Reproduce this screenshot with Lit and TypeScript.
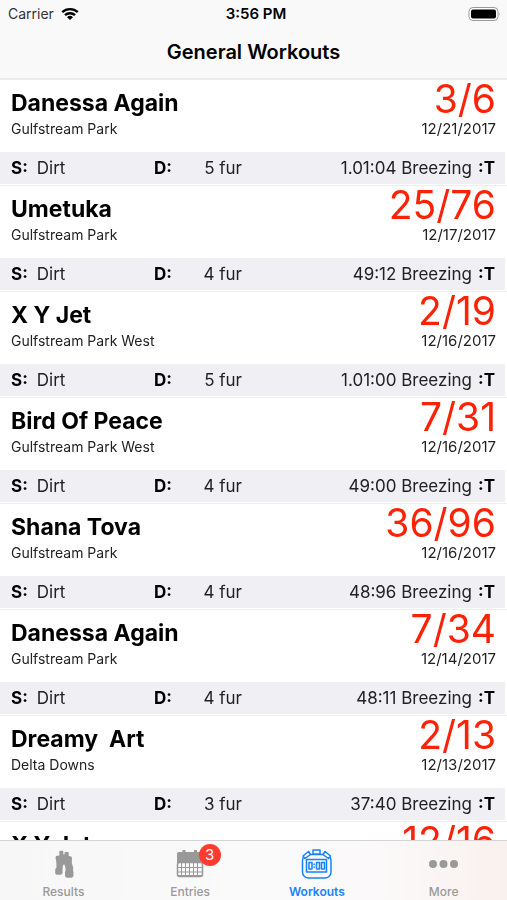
import { LitElement, html, css, svg } from "lit";
import { customElement, property, state } from "lit/decorators.js";
import { classMap } from "lit/directives/class-map.js";

interface Workout {
  horse: string;
  track: string;
  rank: string;
  date: string;
  surface: string;
  distance: string;
  time: string;
}

const workouts: Workout[] = [
  { horse: "Danessa Again", track: "Gulfstream Park", rank: "3/6", date: "12/21/2017", surface: "Dirt", distance: "5 fur", time: "1.01:04 Breezing" },
  { horse: "Umetuka", track: "Gulfstream Park", rank: "25/76", date: "12/17/2017", surface: "Dirt", distance: "4 fur", time: "49:12 Breezing" },
  { horse: "X Y Jet", track: "Gulfstream Park West", rank: "2/19", date: "12/16/2017", surface: "Dirt", distance: "5 fur", time: "1.01:00 Breezing" },
  { horse: "Bird Of Peace", track: "Gulfstream Park West", rank: "7/31", date: "12/16/2017", surface: "Dirt", distance: "4 fur", time: "49:00 Breezing" },
  { horse: "Shana Tova", track: "Gulfstream Park", rank: "36/96", date: "12/16/2017", surface: "Dirt", distance: "4 fur", time: "48:96 Breezing" },
  { horse: "Danessa Again", track: "Gulfstream Park", rank: "7/34", date: "12/14/2017", surface: "Dirt", distance: "4 fur", time: "48:11 Breezing" },
  { horse: "Dreamy  Art", track: "Delta Downs", rank: "2/13", date: "12/13/2017", surface: "Dirt", distance: "3 fur", time: "37:40 Breezing" },
  { horse: "X Y Jet", track: "Gulfstream Park West", rank: "12/16", date: "12/10/2017", surface: "Dirt", distance: "4 fur", time: "48:30 Breezing" },
];

const binoculars = svg`
  <path fill="currentColor" d="M12.300 3.800q0-1 1-1h2q1 0 1 1V6.500h1.200V5q0-1 1-1h2.200q1 0 1 1v3l2.500.5.8 1.500-.2 5 1.500 5q-.8 2 .2 4.500v3q0 2-2 2.300h-4.500q-2-.3-2-2.300v-3q1-2 .5-4.500l-1-3.500-1.500.5-.5 5v3q-.3 1.700-2 1.700h-3.500q-1.800 0-1.800-2v-3.500l1.300-2-.2-5-.8-4.500.5-1.700 3.300-.5z"/>`;

const calendar = svg`
  <path fill="currentColor" d="M5 4h3.500V2h3v2h8.500V2h3v2h4q2 0 2 2v9H3V6q0-2 2-2z"/>
  <rect x="3.500" y="14.500" width="25" height="14" rx="2" fill="#fafafa" stroke="currentColor" stroke-width="1.500"/>
  <path stroke="currentColor" stroke-width="1" fill="none" d="M3.500 19.500h25M3.500 24h25M7.500 15v13M11.500 15v13M15.500 15v13M19.500 15v13M23.500 15v13"/>
  <path stroke="currentColor" stroke-width="2" d="M4 28h24"/>`;

const stopwatch = svg`
  <g fill="none" stroke="currentColor" stroke-width="1.500" stroke-linejoin="round">
    <rect x="2.500" y="6.500" width="28.500" height="23.500" rx="6"/>
    <path fill="#fafafa" d="M13 2h7v4h-7zM3 8l5.500-4.500 2 3-5.500 4zM30.500 8L25 3.500l-2 3 5.500 4z"/>
    <rect x="6.500" y="11.500" width="20" height="12.500"/>
    <path d="M9 14.500h3v6.500H9zM16.500 14.500h3v6.500h-3zM21.500 14.500h3v6.500h-3zM14.200 15.500v1.500M14.200 18.500v1.500"/>
  </g>`;

const dots = svg`
  <g fill="currentColor"><circle cx="6" cy="16" r="4"/><circle cx="16.500" cy="16" r="4"/><circle cx="27" cy="16" r="4"/></g>`;

const tabs = [
  { label: "Results", icon: binoculars, badge: 0 },
  { label: "Entries", icon: calendar, badge: 3 },
  { label: "Workouts", icon: stopwatch, badge: 0 },
  { label: "More", icon: dots, badge: 0 },
];

@customElement("workout-row")
class WorkoutRow extends LitElement {
  @property({ attribute: false }) workout!: Workout;

  static styles = css`
    :host { display: block; border-bottom: 1px solid #ededf0; padding-bottom: 1px; background: #fff; }
    .summary {
      display: grid;
      grid-template-columns: 1fr auto;
      grid-template-rows: 39px 20px;
      padding: 0 11px 13px;
    }
    .horse { margin: 0; align-self: end; font-size: 23px; line-height: 32px; font-weight: 700; white-space: pre; }
    .rank { font-size: 39px; line-height: 38px; color: #fb2208; text-align: right; }
    .track, .date { font-size: 14px; line-height: 20px; color: #222; }
    .date { font-size: 15px; text-align: right; }
    .details {
      display: grid;
      grid-template-columns: 143px 88px 1fr;
      margin: 0 2px 0 0;
      padding: 0 10px 0 11px;
      background: #efeff4;
      font-size: 17px;
      line-height: 32px;
      color: #222;
    }
    .pair { display: flex; gap: 9px; }
    .distance { justify-content: space-between; }
    .time { flex-direction: row-reverse; gap: 6px; }
    dt { font-weight: 700; color: #000; }
    dd { margin: 0; }
  `;

  render() {
    const w = this.workout;
    return html`
      <div class="summary">
        <h2 class="horse">${w.horse}</h2>
        <div class="rank">${w.rank}</div>
        <div class="track">${w.track}</div>
        <div class="date">${w.date}</div>
      </div>
      <dl class="details">
        <div class="pair"><dt>S:</dt><dd>${w.surface}</dd></div>
        <div class="pair distance"><dt>D:</dt><dd>${w.distance}</dd></div>
        <div class="pair time"><dt>:T</dt><dd>${w.time}</dd></div>
      </dl>
    `;
  }
}

@customElement("app-root")
class AppRoot extends LitElement {
  @state() private active = "Workouts";

  static styles = css`
    :host {
      display: flex;
      flex-direction: column;
      height: 100vh;
      background: #fff;
      color: #000;
      font-family: Inter, "Liberation Sans", sans-serif;
    }
    .top { flex: none; background: #f9f9f9; border-bottom: 2px solid #ececec; }
    .status {
      display: grid;
      grid-template-columns: 1fr auto 1fr;
      align-items: center;
      height: 27px;
      padding: 0 7px 0 8px;
      font-size: 14px;
    }
    .carrier { display: flex; align-items: center; gap: 7px; color: #333; }
    .clock { font-size: 15px; font-weight: 600; padding-left: 4px; }
    .battery { justify-self: end; display: block; }
    .title { margin: 0; font-size: 20px; line-height: 51px; font-weight: 600; text-align: center; }
    .list { flex: 1; min-height: 0; margin: 0; padding: 0; list-style: none; overflow-y: auto; scrollbar-width: none; }
    .tabs {
      flex: none;
      display: grid;
      grid-template-columns: repeat(4, 1fr);
      border-top: 1px solid #d4d4d4;
      background: linear-gradient(90deg, #f7f7f7, #fafafa 50%, #fbf9f9 75%, #f9f1ee);
    }
    .tab {
      display: flex;
      flex-direction: column;
      align-items: center;
      gap: 2px;
      padding: 7px 0 0;
      border: 0;
      background: none;
      color: #999;
      font: 500 12px/17px Inter, "Liberation Sans", sans-serif;
      cursor: pointer;
    }
    .active { color: #1683fb; font-weight: 600; }
    .glyph { position: relative; display: block; height: 33px; }
    .badge {
      position: absolute;
      top: -4px;
      left: 25px;
      width: 22px;
      height: 22px;
      border-radius: 11px;
      background: #ff3b30;
      color: #fff;
      font-size: 15px;
      line-height: 22px;
      font-weight: 400;
    }
  `;

  render() {
    return html`
      <header class="top">
        <div class="status">
          <span class="carrier">Carrier
            <svg width="18" height="14" viewBox="0 0 18 14" aria-hidden="true">
              <g fill="none" stroke="#000" stroke-width="2.400">
                <path d="M1.200 5.200a11.300 11.300 0 0 1 15.600 0"/>
                <path d="M4 8.200a7.300 7.300 0 0 1 10 0"/>
              </g>
              <path d="M9 13L6 10.200a4.400 4.400 0 0 1 6 0z"/>
            </svg>
          </span>
          <span class="clock">3:56 PM</span>
          <svg class="battery" width="32" height="14" viewBox="0 0 32 14" role="img" aria-label="Battery full">
            <rect x="1" y=".5" width="29" height="13" rx="4" fill="#fff" stroke="#999"/>
            <rect x="3" y="2.500" width="25" height="9" rx="2"/>
            <path fill="#888" d="M31 5q1 2 0 4z"/>
          </svg>
        </div>
        <h1 class="title">General Workouts</h1>
      </header>
      <ul class="list">
        ${workouts.map((w) => html`<li><workout-row .workout=${w}></workout-row></li>`)}
      </ul>
      <nav class="tabs">
        ${tabs.map((t) => html`
          <button class=${classMap({ tab: true, active: t.label === this.active })} @click=${() => (this.active = t.label)}>
            <span class="glyph">
              <svg width="33" height="33" viewBox="0 0 33 33" aria-hidden="true">${t.icon}</svg>
              ${t.badge ? html`<span class="badge">${t.badge}</span>` : null}
            </span>
            ${t.label}
          </button>`)}
      </nav>
    `;
  }
}
